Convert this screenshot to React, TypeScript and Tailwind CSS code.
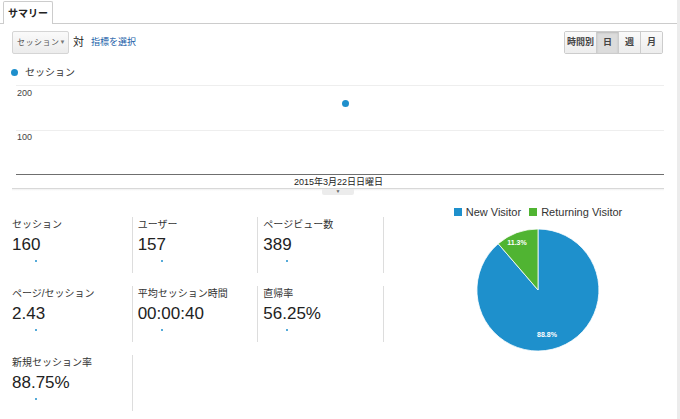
import React from 'react';

const METRICS = [
  { label: 'セッション', value: '160' },
  { label: 'ユーザー', value: '157' },
  { label: 'ページビュー数', value: '389' },
  { label: 'ページ/セッション', value: '2.43' },
  { label: '平均セッション時間', value: '00:00:40' },
  { label: '直帰率', value: '56.25%' },
  { label: '新規セッション率', value: '88.75%' },
];

const RANGES = ['時間別', '日', '週', '月'];

function MetricCell({ label, value }: { label: string; value: string }) {
  return (
    <div className="h-[56px] border-r border-[#ddd] pl-[5px] pt-[1px]">
      <p className="text-[10px] leading-[14px] text-[#333]">{label}</p>
      <p className="mt-[2px] text-[17px] leading-[22px] text-[#222] font-['Liberation_Sans','Noto_Sans_CJK_JP',sans-serif]">
        {value}
      </p>
      {/* スパークライン */}
      <div className="mt-[4px] ml-[23px] w-[2px] h-[2px] rounded-full bg-[#1e8fcc]" />
    </div>
  );
}

function Pie() {
  return (
    <svg width="124" height="124" viewBox="0 0 124 124">
      <path d="M62,62 L62,1 A61,61 0 1 1 22.2,15.7 Z" fill="#1e90cc" stroke="#fff" strokeWidth="0.8" />
      <path d="M62,62 L22.2,15.7 A61,61 0 0 1 62,1 Z" fill="#50b432" stroke="#fff" strokeWidth="0.8" />
      <text x="41" y="17" textAnchor="middle" fontSize="7" fontWeight="bold" fill="#fff" fontFamily="Liberation Sans, sans-serif">
        11.3%
      </text>
      <text x="71" y="109" textAnchor="middle" fontSize="7" fontWeight="bold" fill="#fff" fontFamily="Liberation Sans, sans-serif">
        88.8%
      </text>
    </svg>
  );
}

export default function App() {
  return (
    <div className="flex w-[680px] h-[419px] bg-white overflow-hidden font-['Liberation_Sans','Noto_Sans_CJK_JP',sans-serif] text-[#333]">
      <div className="flex-1 flex flex-col">
        {/* タブ */}
        <div className="h-[24px] border-b border-[#ccc] pl-[3px] flex items-end">
          <div className="h-[23px] -mb-px px-[4px] bg-white border border-b-0 border-[#ccc] rounded-t-[2px] flex items-center">
            <span className="text-[10px] font-bold text-[#222]">サマリー</span>
          </div>
        </div>

        {/* コントロール */}
        <div className="mt-[7px] h-[23px] flex items-center pl-[12px] pr-[14px]">
          <div className="h-[23px] w-[57px] flex items-center justify-between px-[4px] border border-[#d5d5d5] rounded-[2px] bg-gradient-to-b from-[#fafafa] to-[#ececec]">
            <span className="text-[8px] whitespace-nowrap tracking-[0.5px] text-[#555]">セッション</span>
            <span className="text-[6px] text-[#777]">▼</span>
          </div>
          <span className="ml-[4px] text-[11px] text-[#222]">対</span>
          <span className="ml-[7px] text-[9px] text-[#2160a8]">指標を選択</span>
          <div className="ml-auto flex h-[23px] border border-[#ccc] rounded-[2px] overflow-hidden">
            {RANGES.map((r, i) => (
              <div
                key={r}
                className={`h-full flex items-center justify-center text-[9px] font-bold text-[#444] ${
                  i === 0 ? 'w-[31px]' : 'w-[22px] border-l border-[#ccc]'
                } ${
                  i === 1
                    ? 'bg-[#dcdcdc] shadow-[inset_0_1px_2px_rgba(0,0,0,0.15)]'
                    : 'bg-gradient-to-b from-[#fafafa] to-[#ededed]'
                }`}
              >
                {r}
              </div>
            ))}
          </div>
        </div>

        {/* 凡例 */}
        <div className="mt-[12px] h-[12px] flex items-center pl-[11px]">
          <span className="w-[7px] h-[7px] rounded-full bg-[#1e8fcc]" />
          <span className="ml-[7px] text-[10px] text-[#333]">セッション</span>
        </div>

        {/* 折れ線グラフ */}
        <div className="mt-[7px] ml-[16px] mr-[13px] relative h-[90px] border-t border-[#eee] border-b border-b-[#6f6f6f]">
          <span className="absolute left-[1px] top-[1px] text-[9px] text-[#444]">200</span>
          <div className="absolute left-0 right-0 top-[44px] border-t border-[#eee]" />
          <span className="absolute left-[1px] top-[45px] text-[9px] text-[#444]">100</span>
          <div className="absolute left-[326px] top-[14px] w-[7px] h-[7px] rounded-full bg-[#1e8fcc]" />
        </div>
        <div className="ml-[16px] mr-[13px] h-[13px] flex justify-center">
          <span className="text-[9px] leading-[15px] text-[#222] pr-[3px]">2015年3月22日日曜日</span>
        </div>
        <div className="ml-[12px] mr-[13px] h-[6px] relative border-t border-[#d8d8d8]">
          <div className="absolute inset-x-0 top-0 h-[2px] bg-gradient-to-b from-[#f0f0f0] to-white" />
          <div className="absolute left-[310px] top-0 w-[32px] h-[6px] bg-[#ececec] rounded-b-[2px] flex items-start justify-center">
            <span className="text-[5px] leading-[5px] text-[#666]">▼</span>
          </div>
        </div>

        {/* 指標 & 円グラフ */}
        <div className="mt-[23px] flex">
          <div className="ml-[7px] w-[377px] grid grid-cols-3 gap-y-[13px]">
            {METRICS.map((m) => (
              <MetricCell key={m.label} label={m.label} value={m.value} />
            ))}
          </div>
          <div className="ml-[16px] w-[276px] -mt-[13px] flex flex-col items-center">
            <div className="flex items-center gap-[8px] text-[11px] text-[#333]">
              <div className="flex items-center gap-[4px]">
                <span className="w-[8px] h-[8px] bg-[#1e90cc]" />
                <span>New Visitor</span>
              </div>
              <div className="flex items-center gap-[4px]">
                <span className="w-[8px] h-[8px] bg-[#50b432]" />
                <span>Returning Visitor</span>
              </div>
            </div>
            <div className="mt-[7px]">
              <Pie />
            </div>
          </div>
        </div>
      </div>
      <div className="w-[3px] bg-[#ececec]" />
    </div>
  );
}
